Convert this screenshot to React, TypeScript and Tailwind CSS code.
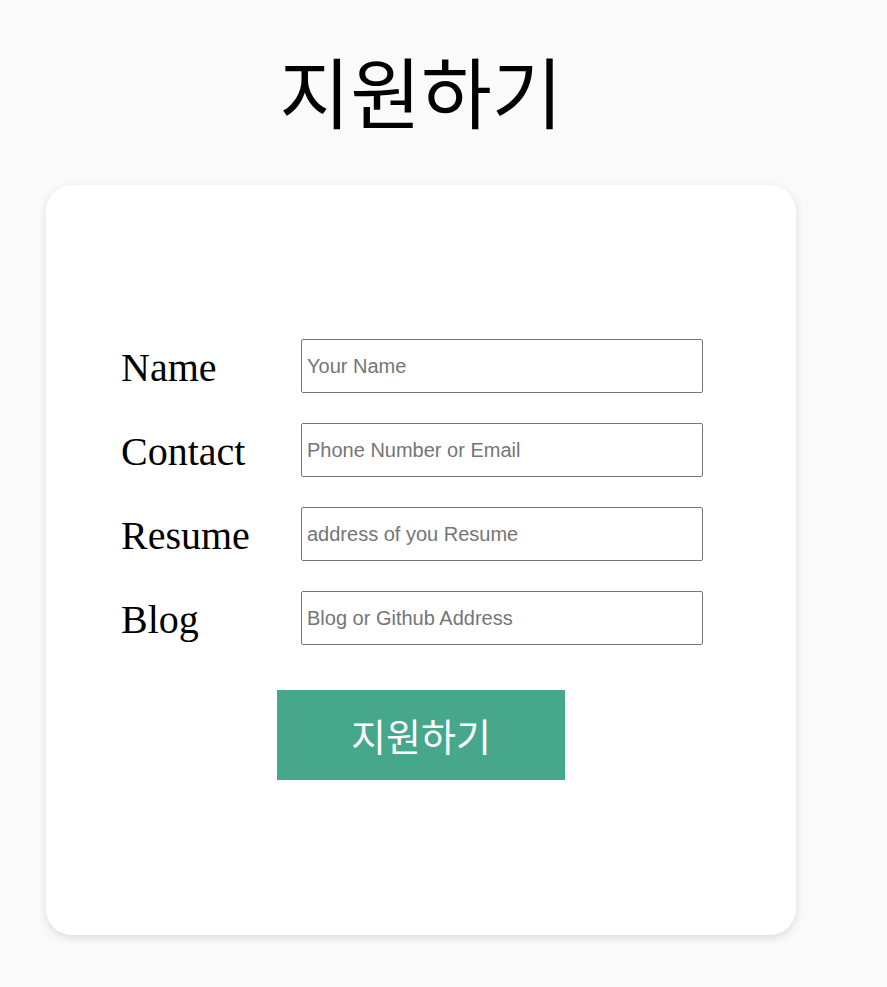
const fields = [
  { label: 'Name', placeholder: 'Your Name' },
  { label: 'Contact', placeholder: 'Phone Number or Email' },
  { label: 'Resume', placeholder: 'address of you Resume' },
  { label: 'Blog', placeholder: 'Blog or Github Address' },
];

export default function App() {
  return (
    <div className="min-h-[987px] w-full bg-[#fafafa] pt-[46px]">
      <div className="ml-[46px] w-[750px]">
        <h1 className="text-center font-['Noto_Sans_CJK_KR',sans-serif] text-[77px] leading-[88px] font-normal text-black">
          지원하기
        </h1>

        <div className="mt-[51px] flex h-[750px] flex-col justify-center rounded-[26px] bg-white pb-[2px] shadow-[0_3px_10px_rgba(0,0,0,0.12)]">
          <form className="flex flex-col">
            <div className="flex flex-col gap-[30px] pl-[75px]">
              {fields.map(({ label, placeholder }) => (
                <div key={label} className="flex items-center">
                  <label className="w-[180px] pt-[4px] font-['Liberation_Serif',serif] text-[40px] leading-none text-black">
                    {label}
                  </label>
                  <input
                    type="text"
                    placeholder={placeholder}
                    className="h-[54px] w-[402px] rounded-[2px] border border-[#767676] bg-white px-[5px] pt-[1px] font-['Liberation_Sans',sans-serif] text-[20px] text-black placeholder:text-[#757575] focus:outline-none"
                  />
                </div>
              ))}
            </div>

            <div className="mt-[45px] flex justify-center">
              <button
                type="button"
                className="h-[90px] w-[288px] bg-[#46a78a] font-['Noto_Sans_CJK_KR',sans-serif] text-[38px] font-normal text-white"
              >
                지원하기
              </button>
            </div>
          </form>
        </div>
      </div>
    </div>
  );
}
